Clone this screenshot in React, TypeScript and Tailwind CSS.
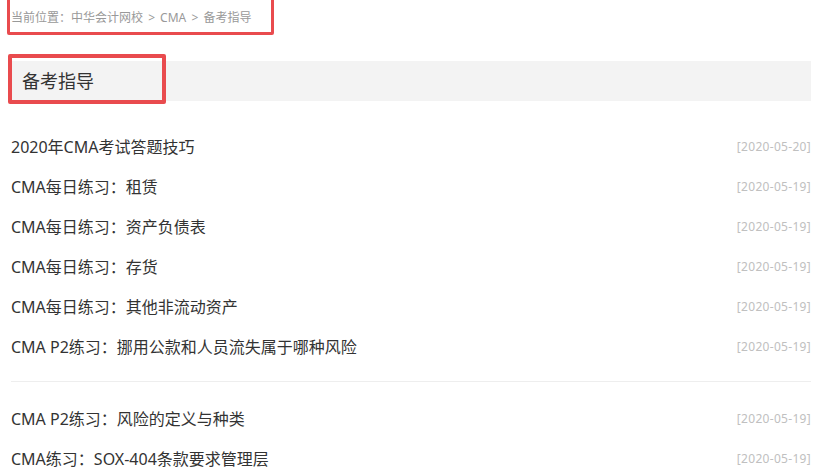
const groups = [
  [
    { title: "2020年CMA考试答题技巧", date: "2020-05-20" },
    { title: "CMA每日练习：租赁", date: "2020-05-19" },
    { title: "CMA每日练习：资产负债表", date: "2020-05-19" },
    { title: "CMA每日练习：存货", date: "2020-05-19" },
    { title: "CMA每日练习：其他非流动资产", date: "2020-05-19" },
    { title: "CMA P2练习：挪用公款和人员流失属于哪种风险", date: "2020-05-19" },
  ],
  [
    { title: "CMA P2练习：风险的定义与种类", date: "2020-05-19" },
    { title: "CMA练习：SOX-404条款要求管理层", date: "2020-05-19" },
    { title: "CMA练习：内部控制的目标", date: "2020-05-19" },
  ],
];

export default function App() {
  return (
    <div
      className="w-[830px] h-[469px] overflow-hidden bg-white text-[#333]"
      style={{ fontFamily: '"Noto Sans", "Noto Sans CJK SC", sans-serif' }}
    >
      {/* breadcrumb */}
      <div className="relative h-[35px] pl-[11px] flex items-center text-[12px] text-[#999]">
        <span>
          当前位置：中华会计网校 <span className="mx-[2px]">&gt;</span> CMA{" "}
          <span className="mx-[2px]">&gt;</span> 备考指导
        </span>
        <div className="absolute left-[7px] top-[-4px] w-[267px] h-[39px] border-[3px] border-[#e94b4e] rounded-[2px]" />
      </div>

      {/* section title */}
      <div className="relative mt-[26px] ml-[11px] w-[800px] h-10 bg-[#f3f3f3] flex items-center pl-[11px] text-[18px]">
        <span>备考指导</span>
        <div className="absolute left-[-3px] top-[-7px] w-[158px] h-[50px] border-[4px] border-[#e94b4e] rounded-[2px]" />
      </div>

      {/* article list */}
      <div className="ml-[11px] w-[800px] mt-[26px]">
        {groups.map((list, gi) => (
          <div key={gi} className={gi > 0 ? "mt-[14px] pt-[17px] border-t border-[#eee]" : ""}>
            {list.map((item) => (
              <div key={item.title} className="h-10 flex items-center justify-between">
                <span className="text-[16px]">{item.title}</span>
                <span className="text-[12px] tracking-[0.3px] text-[#c0c0c0]">[{item.date}]</span>
              </div>
            ))}
          </div>
        ))}
      </div>
    </div>
  );
}
